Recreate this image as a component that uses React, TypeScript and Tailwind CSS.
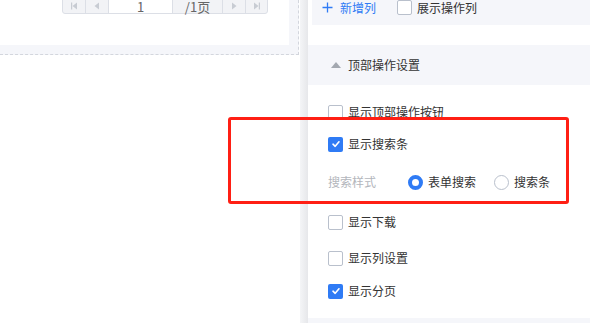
import React from "react";

const font = { fontFamily: '"Noto Sans CJK SC", "Noto Sans", sans-serif' };

function Checkbox({ checked }: { checked?: boolean }) {
  if (checked) {
    return (
      <div className="w-[15px] h-[15px] rounded-[2px] bg-[#2f7bf5] flex items-center justify-center shrink-0">
        <svg width="10" height="10" viewBox="0 0 10 10">
          <path d="M2 5.2 L4.2 7.3 L8 2.8" stroke="white" strokeWidth="1.6" fill="none" strokeLinecap="round" strokeLinejoin="round" />
        </svg>
      </div>
    );
  }
  return <div className="w-[15px] h-[15px] rounded-[2px] border border-[#b9c0cc] bg-white shrink-0" />;
}

function Radio({ checked }: { checked?: boolean }) {
  if (checked) {
    return <div className="w-[15px] h-[15px] rounded-full border-[4px] border-[#2f7bf5] bg-white shrink-0" />;
  }
  return <div className="w-[15px] h-[15px] rounded-full border border-[#b9c0cc] bg-white shrink-0" />;
}

function CheckRow({ checked, label, className }: { checked?: boolean; label: string; className?: string }) {
  return (
    <div className={"h-[24px] shrink-0 flex items-center pl-[20px] " + (className ?? "")}>
      <Checkbox checked={checked} />
      <span className="ml-[5px] text-[12px] text-[#333] leading-none">{label}</span>
    </div>
  );
}

function PagIcon({ kind }: { kind: "first" | "prev" | "next" | "last" }) {
  const c = "#c8ccd3";
  return (
    <svg width="8" height="8" viewBox="0 0 8 8">
      {kind === "first" && (
        <>
          <rect x="1" y="0.5" width="1.2" height="7" fill={c} />
          <path d="M7 0.5 L2.5 4 L7 7.5 Z" fill={c} />
        </>
      )}
      {kind === "prev" && <path d="M6 0.5 L1.5 4 L6 7.5 Z" fill={c} />}
      {kind === "next" && <path d="M2 0.5 L6.5 4 L2 7.5 Z" fill={c} />}
      {kind === "last" && (
        <>
          <path d="M1 0.5 L5.5 4 L1 7.5 Z" fill={c} />
          <rect x="5.8" y="0.5" width="1.2" height="7" fill={c} />
        </>
      )}
    </svg>
  );
}

export default function App() {
  return (
    <div className="relative w-[590px] h-[323px] overflow-hidden bg-white flex" style={font}>
      {/* Left area */}
      <div className="w-[300px] shrink-0 flex flex-col">
        <div className="w-[299px] h-[55px] shrink-0 bg-[#f5f6fa] border-r border-b border-dashed border-[#d3d6dd]">
          <div className="w-[289px] h-[45px] bg-white overflow-hidden">
            <div className="ml-[62px] mt-[-10px] h-[24px] w-[206px] flex border border-[#dcdfe6] rounded-[3px] bg-[#f2f3f6] text-[#666] text-[13px]">
              <div className="w-[23px] flex items-center justify-center border-r border-[#dcdfe6] pt-[8px]"><PagIcon kind="first" /></div>
              <div className="w-[23px] flex items-center justify-center border-r border-[#dcdfe6] pt-[8px]"><PagIcon kind="prev" /></div>
              <div className="w-[64px] bg-white flex items-center justify-center border-r border-[#dcdfe6] leading-none pt-[8px]">1</div>
              <div className="w-[50px] flex items-center justify-center border-r border-[#dcdfe6] leading-none pt-[8px]">/1页</div>
              <div className="w-[23px] flex items-center justify-center border-r border-[#dcdfe6] pt-[8px]"><PagIcon kind="next" /></div>
              <div className="flex-1 flex items-center justify-center pt-[8px]"><PagIcon kind="last" /></div>
            </div>
          </div>
        </div>
      </div>
      {/* Shadow strip */}
      <div className="w-[8px] shrink-0 bg-gradient-to-r from-[#f4f5f7] to-[#e6e7ea]" />
      {/* Right panel */}
      <div className="flex-1 flex flex-col bg-white">
        <div className="ml-[4px] h-[25px] shrink-0 bg-[#f5f6fa] flex items-start pl-[10px]">
          <div className="h-[15px] flex items-center">
            <svg width="11" height="11" viewBox="0 0 11 11">
              <path d="M5.5 0.5 V10.5 M0.5 5.5 H10.5" stroke="#2f7bf5" strokeWidth="1.3" />
            </svg>
            <span className="ml-[7px] text-[12px] text-[#2f7bf5] leading-none">新增列</span>
            <div className="ml-[21px]"><Checkbox /></div>
            <span className="ml-[5px] text-[12px] text-[#333] leading-none">展示操作列</span>
          </div>
        </div>
        <div className="mt-[20px] h-[40px] shrink-0 bg-[#f5f6fa] flex items-center pl-[23px]">
          <div className="w-0 h-0 border-l-[5px] border-r-[5px] border-b-[6px] border-l-transparent border-r-transparent border-b-[#a3a8b0] mb-[1px]" />
          <span className="ml-[7px] text-[12px] text-[#333] leading-none">顶部操作设置</span>
        </div>
        <CheckRow label="显示顶部操作按钮" className="mt-[15px]" />
        <CheckRow checked label="显示搜索条" className="mt-[8px]" />
        <div className="mt-[14px] h-[24px] shrink-0 flex items-center pl-[20px]">
          <span className="text-[12px] text-[#b3b6bc] leading-none w-[80px]">搜索样式</span>
          <Radio checked />
          <span className="ml-[5px] text-[12px] text-[#333] leading-none">表单搜索</span>
          <div className="ml-[18px]"><Radio /></div>
          <span className="ml-[5px] text-[12px] text-[#333] leading-none">搜索条</span>
        </div>
        <CheckRow label="显示下载" className="mt-[16px]" />
        <CheckRow label="显示列设置" className="mt-[12px]" />
        <CheckRow checked label="显示分页" className="mt-[9px]" />
        <div className="mt-[15px] h-[10px] shrink-0 bg-[#f5f6fa]" />
      </div>
      {/* Red annotation box */}
      <div className="absolute left-[228px] top-[117px] w-[341px] h-[87px] border-[3px] border-[#ff1f14] rounded-[3px]" />
    </div>
  );
}
